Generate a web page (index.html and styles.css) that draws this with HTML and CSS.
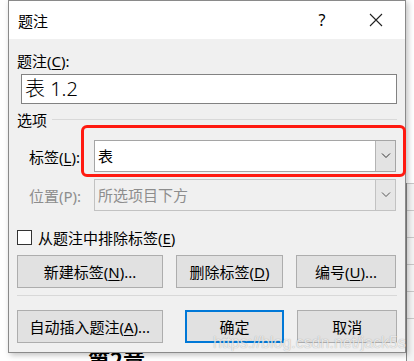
FILE: index.html
```html
<!DOCTYPE html>
<html lang="zh-CN">
<head>
    <meta charset="UTF-8">
    <meta name="viewport" content="width=device-width, initial-scale=1.0">
    <title>题注</title>
    <link rel="stylesheet" href="styles.css">
</head>
<body>
    <!-- 背后的文档 -->
    <div class="doc">
        <h2 class="chapter">第2章</h2>
        <div class="doc-table">
            <div class="doc-row"></div>
            <div class="doc-row"></div>
            <div class="doc-row"></div>
            <div class="doc-row"></div>
            <div class="doc-row"></div>
            <div class="doc-row"></div>
        </div>
    </div>

    <div class="dialog">
        <div class="titlebar">
            <span class="title">题注</span>
            <span class="help">?</span>
            <span class="close">
                <svg width="14" height="14" viewBox="0 0 14 14"><path d="M1 1 L13 13 M13 1 L1 13" stroke="#222" stroke-width="1.1" fill="none"/></svg>
            </span>
        </div>

        <div class="content">
            <div class="label">题注(<u>C</u>):</div>
            <div class="caption-input">表 1.2</div>

            <div class="group-title">选项</div>

            <div class="field">
                <span class="field-label">标签(<u>L</u>):</span>
                <div class="combo">
                    <span class="combo-text">表</span>
                    <span class="combo-btn">
                        <svg width="10" height="6" viewBox="0 0 10 6"><path d="M1 0.5 L5 4.5 L9 0.5" stroke="#333" stroke-width="1" fill="none"/></svg>
                    </span>
                </div>
            </div>
            <div class="field disabled">
                <span class="field-label">位置(P):</span>
                <div class="combo">
                    <span class="combo-text">所选项目下方</span>
                    <span class="combo-btn">
                        <svg width="10" height="6" viewBox="0 0 10 6"><path d="M1 0.5 L5 4.5 L9 0.5" stroke="#555" stroke-width="1" fill="none"/></svg>
                    </span>
                </div>
            </div>

            <label class="check">
                <span class="box"></span>
                <span>从题注中排除标签(<u>E</u>)</span>
            </label>

            <div class="btn-row">
                <button class="btn w-wide">新建标签(<u>N</u>)...</button>
                <button class="btn w-mid">删除标签(<u>D</u>)</button>
                <button class="btn w-num">编号(<u>U</u>)...</button>
            </div>
            <div class="sep"></div>
            <div class="btn-row">
                <button class="btn w-wide">自动插入题注(<u>A</u>)...</button>
                <button class="btn w-ok ok">确定</button>
                <button class="btn w-ok">取消</button>
            </div>
        </div>

        <div class="highlight"></div>
    </div>

    <div class="watermark">https://blog.csdn.net/jack5s</div>
</body>
</html>
```

FILE: styles.css
```css
body {
    margin: 0;
    background-color: #fff;
    font-family: "Noto Sans", "Noto Sans CJK SC", sans-serif;
    color: #000;
    width: 414px;
    height: 361px;
    overflow: hidden;
    position: relative;
}
u {
    text-decoration-thickness: 1px;
    text-underline-offset: 2px;
}

/* document behind the dialog */
.doc {
    display: grid;
    grid-template-columns: 406px 1fr;
    height: 361px;
}
.chapter {
    margin: 344px 0 0 88px;
    font-family: "Noto Sans CJK SC", sans-serif;
    font-size: 22px;
    font-weight: bold;
    line-height: 30px;
}
.doc-table {
    margin-top: 183px;
    background-color: #f4f4f4;
    border-left: 1px solid #888;
}
.doc-row {
    height: 26px;
    border-top: 1px solid #c8c8c8;
}

/* dialog window */
.dialog {
    position: absolute;
    left: 8px;
    top: 0;
    width: 396px;
    height: 351px;
    border: 1px solid #8a8a8a;
    background-color: #f0f0f0;
    box-shadow: 2px 2px 6px rgba(0, 0, 0, 0.25);
}
.titlebar {
    height: 38px;
    background-color: #fff;
    display: flex;
    align-items: center;
    padding-left: 9px;
    font-size: 15px;
}
.title {
    flex: 1;
}
.help {
    width: 20px;
    text-align: center;
    margin-right: 37px;
    font-size: 16px;
}
.close {
    width: 14px;
    height: 14px;
    margin-right: 22px;
    display: flex;
}
.content {
    padding: 0 8px;
    font-size: 15px;
}
.label {
    margin-top: 12px;
    line-height: 20px;
}
.caption-input {
    margin: 3px 0 0 4px;
    height: 28px;
    border: 1px solid #828282;
    background-color: #fff;
    font-size: 20px;
    line-height: 28px;
    padding-left: 3px;
    font-weight: 300;
}
.group-title {
    margin-top: 6px;
    line-height: 20px;
    display: flex;
    align-items: center;
}
.group-title::after {
    content: "";
    flex: 1;
    height: 1px;
    background-color: #d9d9d9;
    margin-left: 5px;
    margin-top: -2px;
}

.field {
    display: flex;
    align-items: center;
    padding-left: 12px;
    margin-top: 10px;
}
.field + .field {
    margin-top: 7px;
}
.field-label {
    width: 65px;
}
.combo {
    flex: 1;
    height: 30px;
    border: 1px solid #a5a5a5;
    background-color: #fff;
    display: flex;
    margin-right: 1px;
}
.combo-text {
    flex: 1;
    line-height: 30px;
    padding-left: 3px;
}
.combo-btn {
    width: 19px;
    border-left: 1px solid #b4b4b4;
    background-color: #e3e3e3;
    display: flex;
    align-items: center;
    justify-content: center;
}
.disabled {
    color: #8d8d8d;
}
.disabled .combo {
    background-color: #f0f0f0;
    border-color: #c2c2c2;
}
.disabled .combo-btn {
    border-left-color: #c2c2c2;
    background-color: #e6e6e6;
}

.check {
    display: flex;
    align-items: center;
    margin-top: 18px;
    height: 16px;
}
.box {
    width: 13px;
    height: 13px;
    border: 1px solid #333;
    background-color: #fff;
    margin-right: 6px;
}

.btn-row {
    display: flex;
    gap: 13px;
    margin-top: 10px;
}
.btn {
    height: 33px;
    border: 1px solid #adadad;
    background-color: #e1e1e1;
    font-family: inherit;
    font-size: 15px;
    color: #000;
    padding: 0;
}
.w-wide { width: 146px; }
.w-mid { width: 107px; }
.w-num { width: 100px; }
.w-ok { width: 100px; }
.ok {
    border: 2px solid #0078d7;
    margin-left: 9px;
}
.sep {
    height: 1px;
    background-color: #d8d8d8;
    margin-top: 7px;
}
.sep + .btn-row {
    margin-top: 14px;
}

/* red annotation box */
.highlight {
    position: absolute;
    left: 72px;
    top: 124px;
    width: 325px;
    height: 52px;
    box-sizing: border-box;
    border: 3px solid #ff1a10;
    border-radius: 6px;
}

.watermark {
    position: absolute;
    left: 213px;
    top: 334px;
    font-family: "Liberation Sans", Arial, sans-serif;
    font-size: 16px;
    color: rgba(255, 255, 255, 0.75);
    text-shadow: 0 0 1px rgba(0, 0, 0, 0.35);
}
```
